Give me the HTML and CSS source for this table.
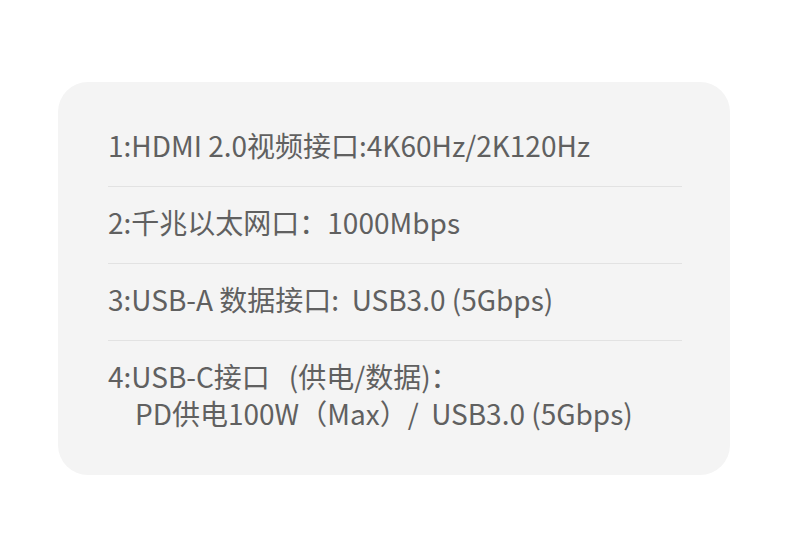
FILE: index.html
```html
<!DOCTYPE html>
<html lang="zh-CN">
<head>
<meta charset="utf-8">
<link rel="stylesheet" href="styles.css">
</head>
<body>
<div class="card">
  <div class="row">1:HDMI 2.0视频接口:4K60Hz/2K120Hz</div>
  <div class="row">2:千兆以太网口：1000Mbps</div>
  <div class="row">3:USB-A 数据接口:&nbsp; USB3.0 (5Gbps)</div>
  <div class="row last">
    <div class="line">4:USB-C接口&nbsp;&nbsp; (供电/数据)：</div>
    <div class="line indent">PD供电100W（Max）/&nbsp; USB3.0 (5Gbps)</div>
  </div>
</div>
</body>
</html>
```
FILE: styles.css
```css
html, body {
  margin: 0;
  padding: 0;
  background: #ffffff;
}
body {
  font-family: "Noto Sans CJK SC", "Noto Sans", sans-serif;
}
.card {
  margin: 82px 0 0 58px;
  width: 672px;
  box-sizing: border-box;
  padding: 28px 48px 21px 50px;
  background: #f4f4f4;
  border-radius: 30px;
}
.row {
  font-size: 28px;
  line-height: 37px;
  color: #606060;
  padding: 17px 0 22px;
  border-bottom: 1px solid #e2e2e2;
  white-space: nowrap;
}
.row.last {
  border-bottom: none;
}
.indent {
  padding-left: 27px;
}
```
